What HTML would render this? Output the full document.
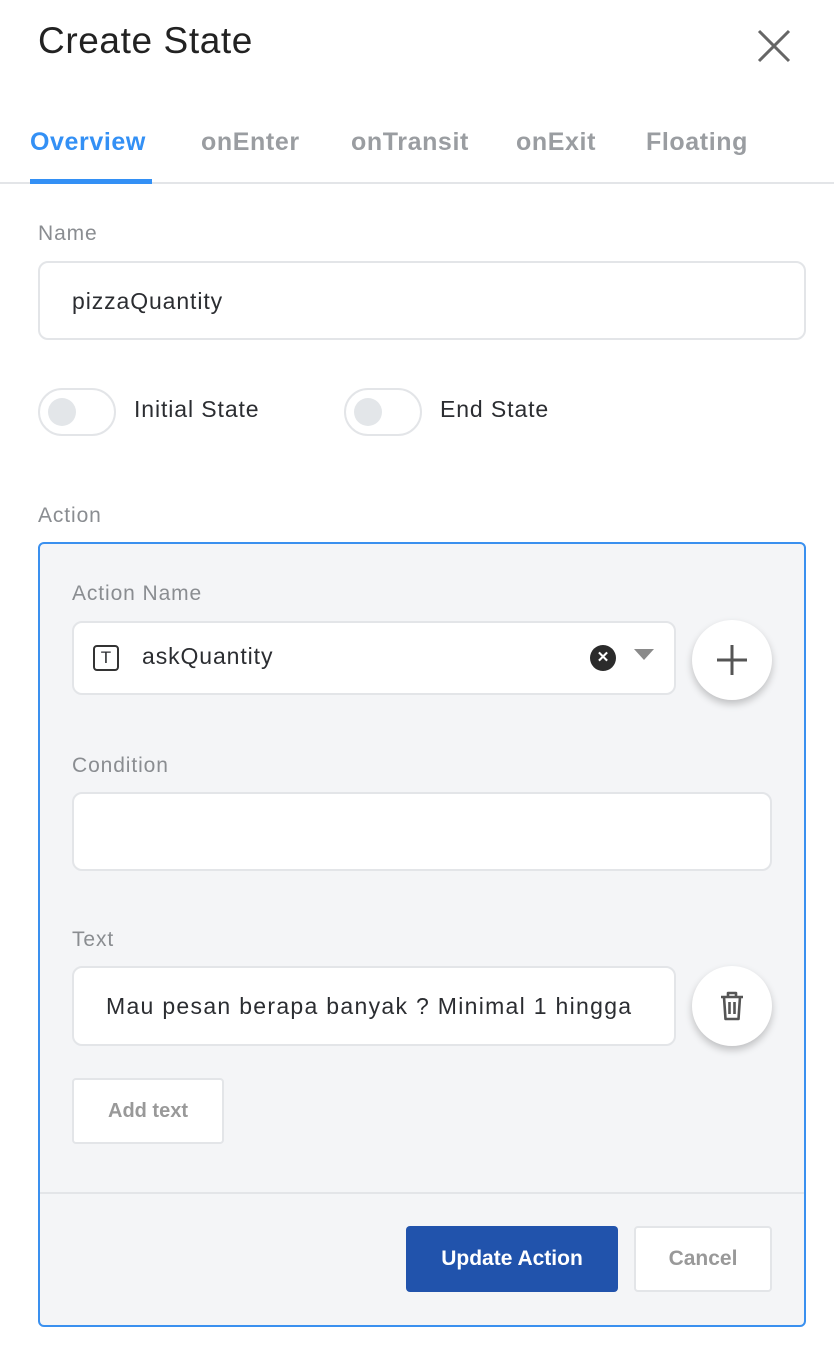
<!DOCTYPE html>
<html><head><style>
*{box-sizing:border-box;margin:0;padding:0}
body{width:834px;height:1356px;background:#fff;font-family:"Liberation Sans",sans-serif;position:relative;overflow:hidden;color:#2b2d31;letter-spacing:0.9px}
.a{position:absolute}
.lbl{font-size:21px;color:#8a8d91}
.inp{background:#fff;border:2px solid #e3e5e8;border-radius:10px}
.tab{font-size:25px;font-weight:bold;color:#9a9da1;top:128px;letter-spacing:0.6px}
.tog{width:78px;height:48px;border:2px solid #e3e5e8;border-radius:24px;background:#fff}
.tog::after{content:"";position:absolute;left:8px;top:8px;width:28px;height:28px;border-radius:50%;background:#e3e6e9}
.circ{width:80px;height:80px;border-radius:50%;background:#fff;box-shadow:0 4px 8px rgba(0,0,0,.22)}
</style></head><body>
<div class="a" style="left:38px;top:20px;font-size:37px;color:#222;letter-spacing:0.6px">Create State</div>
<svg class="a" style="left:756px;top:28px" width="36" height="36"><path d="M3 3L33 33M33 3L3 33" stroke="#666" stroke-width="3"/></svg>
<div class="a tab" style="left:30px;color:#3390f5">Overview</div>
<div class="a tab" style="left:201px">onEnter</div>
<div class="a tab" style="left:351px">onTransit</div>
<div class="a tab" style="left:516px">onExit</div>
<div class="a tab" style="left:646px">Floating</div>
<div class="a" style="left:0;top:182px;width:834px;height:2px;background:#e3e5e8"></div>
<div class="a" style="left:30px;top:179px;width:122px;height:5px;background:#3390f5"></div>
<div class="a lbl" style="left:38px;top:222px">Name</div>
<div class="a inp" style="left:38px;top:261px;width:768px;height:79px"></div>
<div class="a" style="left:72px;top:288px;font-size:23px">pizzaQuantity</div>
<div class="a tog" style="left:38px;top:388px"></div>
<div class="a" style="left:134px;top:396px;font-size:23px">Initial State</div>
<div class="a tog" style="left:344px;top:388px"></div>
<div class="a" style="left:440px;top:396px;font-size:23px">End State</div>
<div class="a lbl" style="left:38px;top:504px">Action</div>
<div class="a" style="left:38px;top:542px;width:768px;height:785px;border:2px solid #3a90ef;border-radius:6px;background:#f4f5f7"></div>
<div class="a" style="left:40px;top:1192px;width:764px;height:2px;background:#e3e5e8"></div>
<div class="a lbl" style="left:72px;top:582px">Action Name</div>
<div class="a inp" style="left:72px;top:621px;width:604px;height:74px"></div>
<div class="a" style="left:93px;top:645px;width:26px;height:26px;border:2px solid #333;border-radius:4px;font-size:17px;text-align:center;line-height:22px;letter-spacing:0">T</div>
<div class="a" style="left:142px;top:643px;font-size:23px">askQuantity</div>
<div class="a" style="left:590px;top:645px;width:26px;height:26px;border-radius:50%;background:#2b2b2b;color:#fff;font-size:15px;font-weight:bold;text-align:center;line-height:26px;letter-spacing:0">✕</div>
<svg class="a" style="left:634px;top:649px" width="20" height="12"><path d="M0 0H20L10 11Z" fill="#8a8a8a"/></svg>
<div class="a circ" style="left:692px;top:620px"></div>
<svg class="a" style="left:716px;top:644px" width="32" height="32"><path d="M16 1V31M1 16H31" stroke="#555" stroke-width="3"/></svg>
<div class="a lbl" style="left:72px;top:754px">Condition</div>
<div class="a inp" style="left:72px;top:792px;width:700px;height:79px"></div>
<div class="a lbl" style="left:72px;top:928px">Text</div>
<div class="a inp" style="left:72px;top:966px;width:604px;height:80px"></div>
<div class="a" style="left:106px;top:993px;font-size:23px;letter-spacing:1.3px;white-space:nowrap">Mau pesan berapa banyak ? Minimal 1 hingga</div>
<div class="a circ" style="left:692px;top:966px"></div>
<svg class="a" style="left:718px;top:990px" width="28" height="32"><path d="M3 7H25M10 7V3H18V7M6 7L7.5 29H20.5L22 7M11.5 12V24M16.5 12V24" stroke="#555" stroke-width="2.6" fill="none" stroke-linejoin="round"/></svg>
<div class="a" style="left:72px;top:1078px;width:152px;height:66px;background:#fff;border:2px solid #e3e5e8;border-radius:4px;font-size:20px;color:#999;font-weight:bold;text-align:center;line-height:62px;letter-spacing:0">Add text</div>
<div class="a" style="left:406px;top:1226px;width:212px;height:66px;background:#2153ac;border-radius:4px;color:#fff;font-size:21px;font-weight:bold;text-align:center;line-height:66px;letter-spacing:0">Update Action</div>
<div class="a" style="left:634px;top:1226px;width:138px;height:66px;background:#fff;border:2px solid #e3e5e8;border-radius:4px;color:#999;font-size:21px;font-weight:bold;text-align:center;line-height:62px;letter-spacing:0">Cancel</div>
</body></html>
